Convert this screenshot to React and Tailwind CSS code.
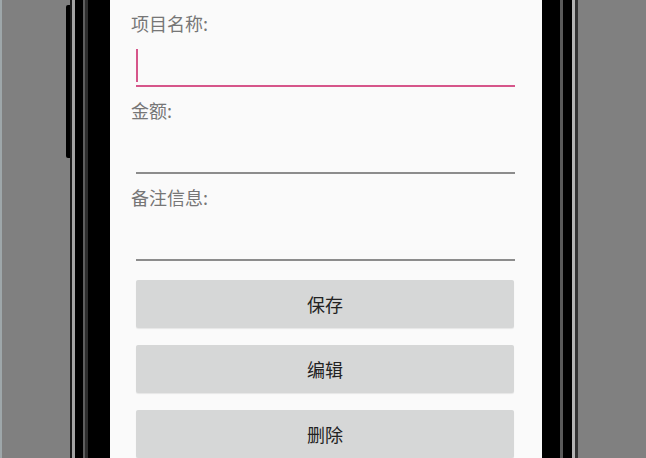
import React from 'react';

const fields = ['项目名称:', '金额:', '备注信息:'];
const actions = ['保存', '编辑', '删除'];

const Field = ({ label, focused }) => (
  <div className="pt-[11px]">
    <div className="h-[24px] pl-[21px] text-[18px] leading-[24px] text-[#767676]">{label}</div>
    <div className="h-[50px] pl-[26px] pr-[27px] pt-[14px]">
      {focused && <div className="w-[2px] h-[33px] bg-[#d6558a]" />}
    </div>
    <div className="mx-[26px] mr-[27px]">
      <div className={focused ? 'h-[2px] bg-[#d6558a]' : 'h-[2px] bg-[#8c8c8c]'} />
    </div>
  </div>
);

const App = () => {
  return (
    <div
      className="w-[646px] h-[458px] overflow-hidden flex bg-[#808080]"
      style={{ fontFamily: '"Noto Sans CJK SC", "Noto Sans", sans-serif' }}
    >
      {/* left side of the phone frame */}
      <div className="w-[2px] bg-[#9ea7aa]" />
      <div className="w-[64px] bg-[#808080]" />
      <div className="w-[4px] bg-[#808080]">
        <div className="mt-[5px] h-[153px] bg-black rounded-l-[2px]" />
      </div>
      <div className="w-[2px] bg-[#1a1a1a]" />
      <div className="w-[3px] bg-[#a3a3a3]" />
      <div className="w-[8px] bg-black" />
      <div className="w-[2px] bg-[#5e5e5e]" />
      <div className="w-[3px] bg-[#2e2e2e]" />
      <div className="w-[22px] bg-black" />

      {/* screen */}
      <div className="w-[432px] bg-[#fafafa] flex flex-col">
        {fields.map((f, i) => (
          <Field key={f} label={f} focused={i === 0} />
        ))}
        <div className="mt-[19px] pl-[26px] pr-[28px] flex flex-col gap-[17px]">
          {actions.map(a => (
            <button
              key={a}
              className="h-[48px] rounded-[2px] bg-[#d6d7d7] text-[18px] text-[#222] shadow-[0_1px_1px_rgba(0,0,0,0.08)]"
            >
              {a}
            </button>
          ))}
        </div>
      </div>

      {/* right side of the phone frame */}
      <div className="w-[18px] bg-black" />
      <div className="w-[3px] bg-[#5a5a5a]" />
      <div className="w-[9px] bg-black" />
      <div className="w-[3px] bg-[#b3b3b3]" />
      <div className="w-[3px] bg-[#333]" />
      <div className="flex-1 bg-[#808080]" />
    </div>
  );
};

export default App;
